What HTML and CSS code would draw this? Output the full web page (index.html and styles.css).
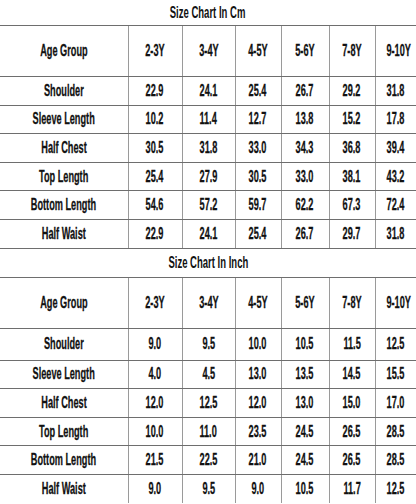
FILE: index.html
```html
<!DOCTYPE html>
<html lang="en">
<head>
  <meta charset="UTF-8">
  <meta name="viewport" content="width=device-width, initial-scale=1.0">
  <title>Size Chart</title>
  <link rel="stylesheet" href="styles.css">
</head>
<body>

  <table class="chart">
    <colgroup>
      <col class="c-label">
      <col class="c-1">
      <col class="c-2">
      <col class="c-3">
      <col class="c-4">
      <col class="c-5">
      <col class="c-6">
    </colgroup>
    <tr class="title"><td colspan="7"><span>Size Chart In Cm</span></td></tr>
    <tr class="head">
      <td><span>Age Group</span></td>
      <td><span>2-3Y</span></td>
      <td><span>3-4Y</span></td>
      <td><span>4-5Y</span></td>
      <td><span>5-6Y</span></td>
      <td><span>7-8Y</span></td>
      <td><span>9-10Y</span></td>
    </tr>
    <tr class="row"><td><span>Shoulder</span></td><td><span>22.9</span></td><td><span>24.1</span></td><td><span>25.4</span></td><td><span>26.7</span></td><td><span>29.2</span></td><td><span>31.8</span></td></tr>
    <tr class="row"><td><span>Sleeve Length</span></td><td><span>10.2</span></td><td><span>11.4</span></td><td><span>12.7</span></td><td><span>13.8</span></td><td><span>15.2</span></td><td><span>17.8</span></td></tr>
    <tr class="row"><td><span>Half Chest</span></td><td><span>30.5</span></td><td><span>31.8</span></td><td><span>33.0</span></td><td><span>34.3</span></td><td><span>36.8</span></td><td><span>39.4</span></td></tr>
    <tr class="row"><td><span>Top Length</span></td><td><span>25.4</span></td><td><span>27.9</span></td><td><span>30.5</span></td><td><span>33.0</span></td><td><span>38.1</span></td><td><span>43.2</span></td></tr>
    <tr class="row"><td><span>Bottom Length</span></td><td><span>54.6</span></td><td><span>57.2</span></td><td><span>59.7</span></td><td><span>62.2</span></td><td><span>67.3</span></td><td><span>72.4</span></td></tr>
    <tr class="row"><td><span>Half Waist</span></td><td><span>22.9</span></td><td><span>24.1</span></td><td><span>25.4</span></td><td><span>26.7</span></td><td><span>29.7</span></td><td><span>31.8</span></td></tr>

    <tr class="title second"><td colspan="7"><span>Size Chart In Inch</span></td></tr>
    <tr class="head">
      <td><span>Age Group</span></td>
      <td><span>2-3Y</span></td>
      <td><span>3-4Y</span></td>
      <td><span>4-5Y</span></td>
      <td><span>5-6Y</span></td>
      <td><span>7-8Y</span></td>
      <td><span>9-10Y</span></td>
    </tr>
    <tr class="row first"><td><span>Shoulder</span></td><td><span>9.0</span></td><td><span>9.5</span></td><td><span>10.0</span></td><td><span>10.5</span></td><td><span>11.5</span></td><td><span>12.5</span></td></tr>
    <tr class="row"><td><span>Sleeve Length</span></td><td><span>4.0</span></td><td><span>4.5</span></td><td><span>13.0</span></td><td><span>13.5</span></td><td><span>14.5</span></td><td><span>15.5</span></td></tr>
    <tr class="row"><td><span>Half Chest</span></td><td><span>12.0</span></td><td><span>12.5</span></td><td><span>12.0</span></td><td><span>13.0</span></td><td><span>15.0</span></td><td><span>17.0</span></td></tr>
    <tr class="row"><td><span>Top Length</span></td><td><span>10.0</span></td><td><span>11.0</span></td><td><span>23.5</span></td><td><span>24.5</span></td><td><span>26.5</span></td><td><span>28.5</span></td></tr>
    <tr class="row"><td><span>Bottom Length</span></td><td><span>21.5</span></td><td><span>22.5</span></td><td><span>21.0</span></td><td><span>24.5</span></td><td><span>26.5</span></td><td><span>28.5</span></td></tr>
    <tr class="row last"><td><span>Half Waist</span></td><td><span>9.0</span></td><td><span>9.5</span></td><td><span>9.0</span></td><td><span>10.5</span></td><td><span>11.7</span></td><td><span>12.5</span></td></tr>
  </table>

</body>
</html>
```

FILE: styles.css
```css
body {
  margin: 0;
  padding: 0;
  background: #ffffff;
  font-family: 'Liberation Sans', Arial, sans-serif;
  color: #111111;
  overflow: hidden;
}

.chart {
  width: 416px;
  border-collapse: collapse;
  table-layout: fixed;
}

/* column widths */
.c-label { width: 128px; }
.c-1 { width: 54px; }
.c-2 { width: 53px; }
.c-3 { width: 46px; }
.c-4 { width: 48px; }
.c-5 { width: 46px; }
.c-6 { width: 41px; }

.chart td {
  padding: 0;
  text-align: center;
  vertical-align: middle;
  font-size: 17px;
  line-height: 18px;
  font-weight: bold;
  white-space: nowrap;
  overflow: hidden;
  border-left: 1px solid #9a9a9a;
  border-bottom: 1px solid #6e6e6e;
}

.chart td:first-child {
  border-left: none;
}

.chart td span {
  display: inline-block;
  transform: scaleX(0.54);
  -webkit-text-stroke: 0.3px #111111;
}

.title td {
  height: 25px;
  border-left: none;
}

.title td span {
  transform: scaleX(0.56);
  -webkit-text-stroke: 0;
}

.title.second td {
  height: 27px;
  padding-top: 1px;
}

.head td {
  height: 50px;
}

.row td {
  height: 27.6px;
}

.row.first td {
  height: 31px;
}

.row.last td {
  border-bottom: none;
}
```
